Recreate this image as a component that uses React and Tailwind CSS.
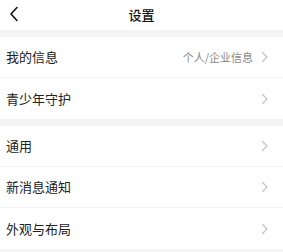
import React from "react";

const Chevron = () => (
  <svg width="8" height="12" viewBox="0 0 8 12" className="shrink-0">
    <path d="M1.5 1.5 L6 6 L1.5 10.5" fill="none" stroke="#c4c4c4" strokeWidth="1.3" strokeLinecap="round" strokeLinejoin="round" />
  </svg>
);

const Row = ({ label, value, last }) => (
  <div className={`flex h-[41px] items-center justify-between pl-[6px] pr-[14px] ${last ? "" : "border-b border-[#f2f2f2]"}`}>
    <span className="text-[13px] text-[#222]">{label}</span>
    <div className="flex items-center gap-[8px]">
      {value && <span className="text-[11px] text-[#888]">{value}</span>}
      <Chevron />
    </div>
  </div>
);

export default function App() {
  return (
    <div
      className="w-[283px] h-[252px] overflow-hidden bg-[#f4f4f4]"
      style={{ fontFamily: '"Noto Sans CJK SC", "Noto Sans", sans-serif' }}
    >
      <div className="relative flex h-[30px] items-center justify-center bg-white">
        <svg width="10" height="16" viewBox="0 0 10 16" className="absolute left-[9px] top-[6px]">
          <path d="M8 1.5 L2 8 L8 14.5" fill="none" stroke="#111" strokeWidth="1.6" strokeLinecap="round" strokeLinejoin="round" />
        </svg>
        <span className="text-[13px] font-medium text-[#111]">设置</span>
      </div>
      <div className="mt-[7px] bg-white">
        <Row label="我的信息" value="个人/企业信息" />
        <Row label="青少年守护" last />
      </div>
      <div className="mt-[7px] bg-white">
        <Row label="通用" />
        <Row label="新消息通知" />
        <Row label="外观与布局" last />
      </div>
    </div>
  );
}
